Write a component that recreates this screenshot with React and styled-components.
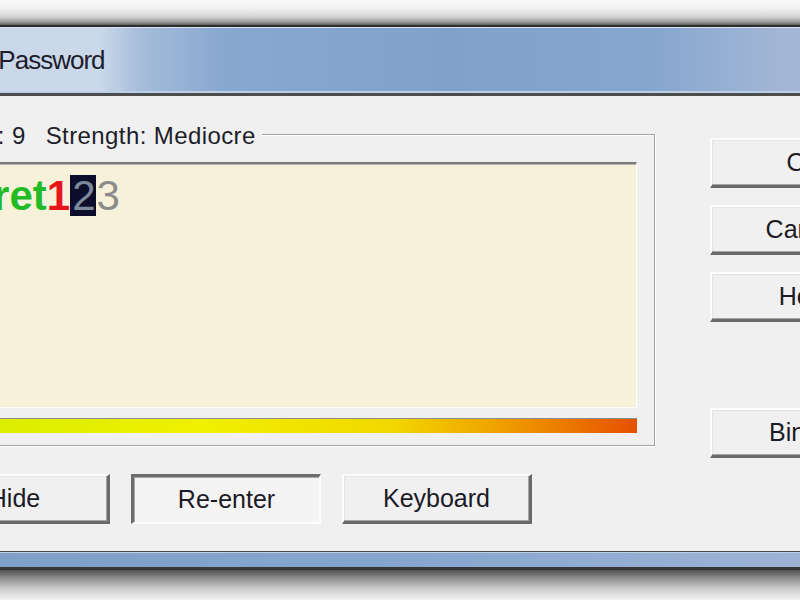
import React from "react";
import styled, { createGlobalStyle } from "styled-components";

const GlobalStyle = createGlobalStyle`
  html, body {
    margin: 0;
    padding: 0;
    background: #ffffff;
    overflow: hidden;
    font-family: "Liberation Sans", Arial, sans-serif;
  }
`;

const Screen = styled.div`
  width: 800px;
  height: 600px;
  overflow: hidden;
  display: flex;
  flex-direction: column;
  background: #ffffff;
`;

const TopShade = styled.div`
  height: 25px;
  flex-shrink: 0;
  background: linear-gradient(#fbfbfb 0, #efefef 9px, #d2d2d2 17px, #9a9a9a 22px, #5c5c5c 25px);
`;

const Window = styled.div`
  margin-left: -110px;
  width: 1100px;
  flex-shrink: 0;
  display: flex;
  flex-direction: column;
`;

const TitleBar = styled.div`
  height: 65px;
  border-top: 2px solid #2e2e2e;
  border-bottom: 3px solid #4d4d4d;
  box-shadow: inset 0 1px 0 #d6e2f0, inset 0 -2px 0 #bccfe6;
  background: linear-gradient(
    90deg,
    #c9d7e9 0,
    #cad8ea 210px,
    #a6bdda 250px,
    #89a8d0 330px,
    #7fa1cc 560px,
    #86a6ce 760px,
    #a2b6d6 890px,
    #a8bad7 1100px
  );
  display: flex;
  align-items: center;
  padding: 1px 0 0 45px;
  font-size: 26px;
  letter-spacing: -1px;
  color: #1c1c2c;
`;

const Body = styled.div`
  height: 455px;
  box-sizing: border-box;
  background: #f0f0f0;
  display: flex;
  align-items: flex-start;
  gap: 55px;
  padding: 25px 0 0 13px;
`;

const LeftCol = styled.div`
  width: 752px;
  display: flex;
  flex-direction: column;
`;

const GroupBox = styled.fieldset`
  margin: 0;
  min-width: 0;
  padding: 0 17px 12px 9px;
  border: 1px solid #a3a3a3;
  box-shadow: 1px 1px 0 #ffffff, inset 1px 1px 0 #ffffff;
`;

const Legend = styled.legend`
  margin-left: 5px;
  padding: 0 6px 0 4px;
  font-size: 24px;
  line-height: 26px;
  letter-spacing: 0.4px;
  color: #1e1e2a;
  background: #f0f0f0;
  white-space: nowrap;
`;

const LegendPart = styled.span`
  position: relative;
  top: 2px;
  margin-left: ${(p) => p.$space || 0}px;
`;

const PasswordField = styled.div`
  margin-top: 15px;
  height: 246px;
  box-sizing: border-box;
  border-style: solid;
  border-width: 2px 1px 1px 2px;
  border-color: #7c7c7c #ffffff #ffffff #7c7c7c;
  box-shadow: inset 1px 1px 0 #b4b4b4;
  background: #f8f1da;
  padding: 11px 0 0 8px;
  overflow: hidden;
`;

const PasswordLine = styled.div`
  font-family: "Liberation Sans", Arial, sans-serif;
  font-size: 42px;
  line-height: 41px;
  white-space: nowrap;
`;

const tones = {
  green: "#22bb26",
  red: "#e8161a",
  gray: "#8c8c8c",
};

const Glyph = styled.span`
  color: ${(p) => tones[p.$tone]};
  font-weight: ${(p) => (p.$bold ? 700 : 400)};
`;

const CaretGlyph = styled.span`
  display: inline-block;
  padding: 0 1px 0 2px;
  background: #0b0d2a;
  color: #7d8a9a;
`;

const StrengthBar = styled.div`
  margin-top: 10px;
  height: 15px;
  box-sizing: border-box;
  border-top: 1px solid #8c8c8c;
  background: linear-gradient(
    90deg,
    #9fdc00 0%,
    #dcee00 12%,
    #f0f000 40%,
    #f2d800 66%,
    #f0a400 80%,
    #e65000 100%
  );
`;

const ButtonRow = styled.div`
  display: flex;
  gap: 21px;
  margin-top: 28px;
  padding-left: 17px;
`;

const RightCol = styled.div`
  margin-top: 17px;
  width: 190px;
  display: flex;
  flex-direction: column;
  gap: 17px;
`;

const DialogButton = styled.button`
  width: 190px;
  height: 50px;
  flex-shrink: 0;
  box-sizing: border-box;
  margin: ${(p) => (p.$push ? `${p.$push}px 0 0` : 0)};
  padding: 0;
  font-family: "Liberation Sans", Arial, sans-serif;
  font-size: 25px;
  color: #1b1b26;
  background: ${(p) => (p.$pressed ? "#f4f4f4" : "#f0f0f0")};
  border-style: solid;
  border-width: ${(p) => (p.$pressed ? "3px 2px 2px 3px" : "2px 3px 3px 2px")};
  border-color: ${(p) =>
    p.$pressed
      ? "#6c6c6c #fcfcfc #fcfcfc #6c6c6c"
      : "#fcfcfc #6a6a6a #6a6a6a #fcfcfc"};
  box-shadow: ${(p) =>
    p.$pressed
      ? "inset 1px 1px 0 #a8a8a8"
      : "inset -1px -1px 0 #a6a6a6, inset 1px 1px 0 #e4e4e4"};
`;

const BottomFrame = styled.div`
  height: 15px;
  border-top: 1px solid #4a4a4a;
  border-bottom: 3px solid #363636;
  box-shadow: inset 0 1px 0 #bcd0e8;
  background: linear-gradient(90deg, #7e9ec9 0, #86a5ce 500px, #9cb3d5 900px, #a6b9d7 1100px);
`;

const BottomShade = styled.div`
  flex: 1;
  background: linear-gradient(#505050 0, #8c8c8c 8px, #c8c8c8 18px, #e6e6e6 26px, #f2f2f2 100%);
`;

const App = () => {
  return (
    <>
      <GlobalStyle />
      <Screen>
        <TopShade />
        <Window>
          <TitleBar>Enter Password</TitleBar>
          <Body>
            <LeftCol>
              <GroupBox>
                <Legend>
                  <LegendPart>Length: 9</LegendPart>
                  <LegendPart $space={20}>Strength: Mediocre</LegendPart>
                </Legend>
                <PasswordField>
                  <PasswordLine>
                    <Glyph $tone="green" $bold>secret</Glyph>
                    <Glyph $tone="red" $bold>1</Glyph>
                    <CaretGlyph>2</CaretGlyph>
                    <Glyph $tone="gray">3</Glyph>
                  </PasswordLine>
                </PasswordField>
                <StrengthBar />
              </GroupBox>
              <ButtonRow>
                <DialogButton>Hide</DialogButton>
                <DialogButton $pressed>Re-enter</DialogButton>
                <DialogButton>Keyboard</DialogButton>
              </ButtonRow>
            </LeftCol>
            <RightCol>
              <DialogButton>OK</DialogButton>
              <DialogButton>Cancel</DialogButton>
              <DialogButton>Help</DialogButton>
              <DialogButton $push={69}>Binary</DialogButton>
            </RightCol>
          </Body>
          <BottomFrame />
        </Window>
        <BottomShade />
      </Screen>
    </>
  );
};

export default App;
